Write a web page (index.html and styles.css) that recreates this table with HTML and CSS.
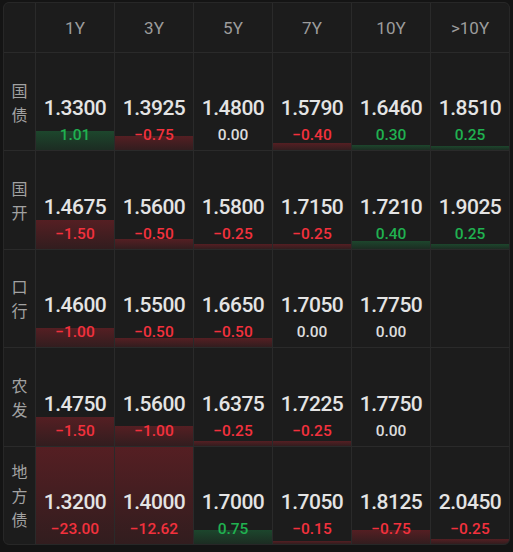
FILE: index.html
```html
<!DOCTYPE html>
<html lang="zh">
<head>
<meta charset="utf-8">
<link rel="stylesheet" href="styles.css">
</head>
<body>
<div class="table">
  <div class="hd corner"></div>
  <div class="hd">1Y</div>
  <div class="hd">3Y</div>
  <div class="hd">5Y</div>
  <div class="hd">7Y</div>
  <div class="hd">10Y</div>
  <div class="hd">&gt;10Y</div>

  <div class="label"><span>国</span><span>债</span></div>
  <div class="cell"><div class="bar up" style="height:19.4px"></div><div class="val">1.3300</div><div class="chg up">1.01</div></div>
  <div class="cell"><div class="bar down" style="height:14.4px"></div><div class="val">1.3925</div><div class="chg down">−0.75</div></div>
  <div class="cell"><div class="val">1.4800</div><div class="chg flat">0.00</div></div>
  <div class="cell"><div class="bar down" style="height:7.7px"></div><div class="val">1.5790</div><div class="chg down">−0.40</div></div>
  <div class="cell"><div class="bar up" style="height:5.8px"></div><div class="val">1.6460</div><div class="chg up">0.30</div></div>
  <div class="cell"><div class="bar up" style="height:4.8px"></div><div class="val">1.8510</div><div class="chg up">0.25</div></div>

  <div class="label"><span>国</span><span>开</span></div>
  <div class="cell"><div class="bar down" style="height:28.8px"></div><div class="val">1.4675</div><div class="chg down">−1.50</div></div>
  <div class="cell"><div class="bar down" style="height:9.6px"></div><div class="val">1.5600</div><div class="chg down">−0.50</div></div>
  <div class="cell"><div class="bar down" style="height:4.8px"></div><div class="val">1.5800</div><div class="chg down">−0.25</div></div>
  <div class="cell"><div class="bar down" style="height:4.8px"></div><div class="val">1.7150</div><div class="chg down">−0.25</div></div>
  <div class="cell"><div class="bar up" style="height:7.7px"></div><div class="val">1.7210</div><div class="chg up">0.40</div></div>
  <div class="cell"><div class="bar up" style="height:4.8px"></div><div class="val">1.9025</div><div class="chg up">0.25</div></div>

  <div class="label"><span>口</span><span>行</span></div>
  <div class="cell"><div class="bar down" style="height:19.2px"></div><div class="val">1.4600</div><div class="chg down">−1.00</div></div>
  <div class="cell"><div class="bar down" style="height:9.6px"></div><div class="val">1.5500</div><div class="chg down">−0.50</div></div>
  <div class="cell"><div class="bar down" style="height:9.6px"></div><div class="val">1.6650</div><div class="chg down">−0.50</div></div>
  <div class="cell"><div class="val">1.7050</div><div class="chg flat">0.00</div></div>
  <div class="cell"><div class="val">1.7750</div><div class="chg flat">0.00</div></div>
  <div class="cell"></div>

  <div class="label"><span>农</span><span>发</span></div>
  <div class="cell"><div class="bar down" style="height:28.8px"></div><div class="val">1.4750</div><div class="chg down">−1.50</div></div>
  <div class="cell"><div class="bar down" style="height:19.2px"></div><div class="val">1.5600</div><div class="chg down">−1.00</div></div>
  <div class="cell"><div class="bar down" style="height:4.8px"></div><div class="val">1.6375</div><div class="chg down">−0.25</div></div>
  <div class="cell"><div class="bar down" style="height:4.8px"></div><div class="val">1.7225</div><div class="chg down">−0.25</div></div>
  <div class="cell"><div class="val">1.7750</div><div class="chg flat">0.00</div></div>
  <div class="cell"></div>

  <div class="label"><span>地</span><span>方</span><span>债</span></div>
  <div class="cell"><div class="bar down" style="height:100%"></div><div class="val">1.3200</div><div class="chg down">−23.00</div></div>
  <div class="cell"><div class="bar down" style="height:100%"></div><div class="val">1.4000</div><div class="chg down">−12.62</div></div>
  <div class="cell"><div class="bar up" style="height:14.4px"></div><div class="val">1.7000</div><div class="chg up">0.75</div></div>
  <div class="cell"><div class="bar down" style="height:2.9px"></div><div class="val">1.7050</div><div class="chg down">−0.15</div></div>
  <div class="cell"><div class="bar down" style="height:14.4px"></div><div class="val">1.8125</div><div class="chg down">−0.75</div></div>
  <div class="cell"><div class="bar down" style="height:4.8px"></div><div class="val">2.0450</div><div class="chg down">−0.25</div></div>
</div>
</body>
</html>
```
FILE: styles.css
```css
html, body {
  margin: 0;
  padding: 0;
  background: #141414;
}
body {
  padding: 2px 3px 0 3px;
  font-family: Roboto, "Noto Sans CJK SC", sans-serif;
}
.table {
  width: 507px;
  height: 543px;
  box-sizing: border-box;
  border: 1px solid #272727;
  border-radius: 6px;
  overflow: hidden;
  background: #2a2a2a;
  display: grid;
  grid-template-columns: 31px repeat(6, 1fr);
  grid-template-rows: 49px repeat(5, 1fr);
  gap: 1px;
}
.hd {
  background: #1c1c1c;
  color: #9c9c9c;
  font-size: 17px;
  font-weight: 400;
  display: flex;
  align-items: center;
  justify-content: center;
}
.label {
  background: #1c1c1c;
  color: #a2a2a2;
  font-family: "Noto Sans CJK SC", sans-serif;
  font-size: 16px;
  line-height: 24px;
  display: flex;
  flex-direction: column;
  align-items: center;
  justify-content: center;
}
.cell {
  background: #1c1c1c;
  position: relative;
  display: flex;
  flex-direction: column;
  justify-content: flex-end;
  align-items: center;
}
.bar {
  position: absolute;
  left: 0;
  right: 0;
  bottom: 0;
}
.bar.down {
  background: linear-gradient(to bottom, rgba(195, 36, 48, 0.34), rgba(195, 36, 48, 0.13));
}
.bar.up {
  background: linear-gradient(to bottom, rgba(30, 160, 80, 0.32), rgba(30, 160, 80, 0.12));
}
.val {
  position: relative;
  color: #e4e4e4;
  font-size: 21px;
  font-weight: 500;
  letter-spacing: -0.5px;
  line-height: 26px;
  margin-bottom: 3px;
}
.chg {
  position: relative;
  font-size: 15.5px;
  font-weight: 500;
  line-height: 22px;
  padding-bottom: 4px;
}
.chg.down { color: #f2313d; }
.chg.up { color: #20b150; }
.chg.flat { color: #dcdcdc; }
```
